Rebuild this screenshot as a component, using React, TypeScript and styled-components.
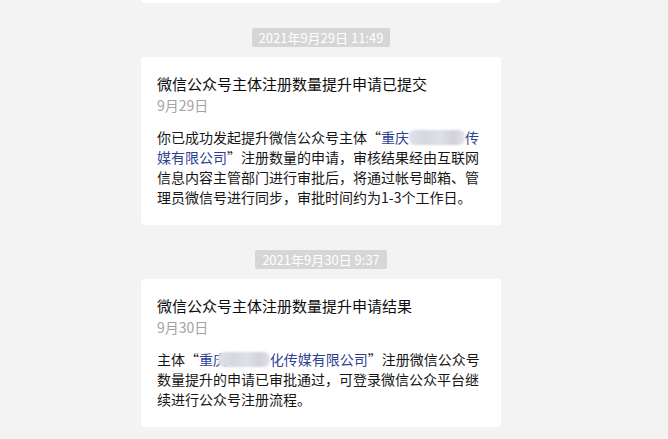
import React from "react";
import styled, { createGlobalStyle } from "styled-components";

const GlobalStyle = createGlobalStyle`
  html, body {
    margin: 0;
    padding: 0;
    background: #f3f3f3;
  }
  body {
    font-family: "Noto Sans CJK SC", "Noto Sans", "Liberation Sans", sans-serif;
    -webkit-font-smoothing: antialiased;
  }
`;

const Page = styled.div`
  width: 668px;
  height: 439px;
  overflow: hidden;
  background: #f3f3f3;
`;

const Column = styled.div`
  width: 360px;
  margin-left: 141px;
  display: flex;
  flex-direction: column;
  align-items: center;
`;

const CardTail = styled.div`
  width: 100%;
  height: 3px;
  background: #ffffff;
  border-radius: 0 0 3px 3px;
`;

const TimePill = styled.div`
  margin: 25px 0 10px;
  height: 19px;
  padding: 0 7px;
  border-radius: 2px;
  background: #d6d6d6;
  color: #ffffff;
  font-size: 13px;
  line-height: 19px;
  white-space: nowrap;
`;

const Card = styled.div`
  width: 100%;
  box-sizing: border-box;
  background: #ffffff;
  border-radius: 3px;
  padding: 16px 16px 18px;
`;

const Title = styled.div`
  font-size: 15px;
  line-height: 22px;
  color: #0d0d0d;
`;

const DateLine = styled.div`
  font-size: 14px;
  line-height: 20px;
  color: #a3a3a3;
`;

const Body = styled.div`
  margin-top: 12px;
  font-size: 14px;
  line-height: 20px;
  color: #161616;
  word-break: break-all;
`;

const Name = styled.span`
  color: #2f3f94;
`;

const Redact = styled.span<{ $w: number; $shift?: number }>`
  display: inline-block;
  width: ${(p) => p.$w}em;
  height: 15px;
  margin-left: ${(p) => -(p.$shift ?? 0)}em;
  vertical-align: -2px;
  border-radius: 6px;
  background: linear-gradient(
    90deg,
    #e0e1e9 0%,
    #d5d6df 30%,
    #dfe0e8 55%,
    #d0d1d9 80%,
    #e3e4eb 100%
  );
  filter: blur(1.2px);
`;

type Msg = {
  time: string;
  title: string;
  date: string;
  body: React.ReactNode;
};

const messages: Msg[] = [
  {
    time: "2021年9月29日 11:49",
    title: "微信公众号主体注册数量提升申请已提交",
    date: "9月29日",
    body: (
      <>
        你已成功发起提升微信公众号主体“
        <Name>
          重庆
          <Redact $w={4} />
          传媒有限公司
        </Name>
        ”注册数量的申请，审核结果经由互联网信息内容主管部门进行审批后，将通过帐号邮箱、管理员微信号进行同步，审批时间约为1-3个工作日。
      </>
    ),
  },
  {
    time: "2021年9月30日 9:37",
    title: "微信公众号主体注册数量提升申请结果",
    date: "9月30日",
    body: (
      <>
        主体“
        <Name>
          重庆
          <Redact $w={3.7} $shift={0.65} />
          化传媒有限公司
        </Name>
        ”注册微信公众号数量提升的申请已审批通过，可登录微信公众平台继续进行公众号注册流程。
      </>
    ),
  },
];

export default function App() {
  return (
    <>
      <GlobalStyle />
      <Page>
        <Column>
          <CardTail />
          {messages.map((m) => (
            <React.Fragment key={m.time}>
              <TimePill>{m.time}</TimePill>
              <Card>
                <Title>{m.title}</Title>
                <DateLine>{m.date}</DateLine>
                <Body>{m.body}</Body>
              </Card>
            </React.Fragment>
          ))}
        </Column>
      </Page>
    </>
  );
}
